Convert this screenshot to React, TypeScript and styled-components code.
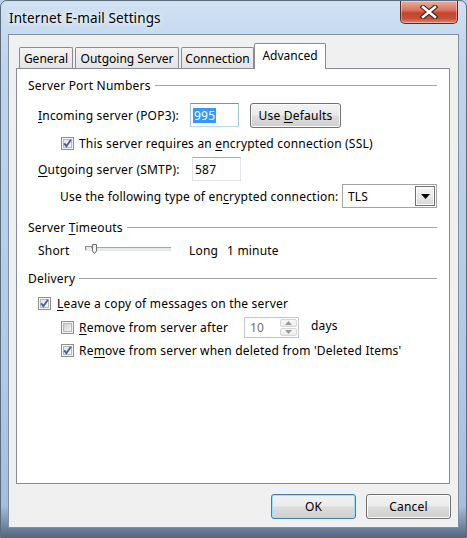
import React from "react";
import styled, { createGlobalStyle, css } from "styled-components";

const GlobalStyle = createGlobalStyle`
  html, body { margin: 0; padding: 0; }
  body {
    width: 467px;
    height: 538px;
    overflow: hidden;
    background: #b9d0e8;
    font-family: "Segoe UI", "Noto Sans", "DejaVu Sans", sans-serif;
    font-size: 12px;
    letter-spacing: 0.2px;
    color: #000;
  }
`;

const Window = styled.div`
  box-sizing: border-box;
  width: 467px;
  height: 538px;
  display: flex;
  flex-direction: column;
  padding: 0 7px 9px 7px;
  border: 1px solid #5d6c7c;
  border-radius: 7px 7px 0 0;
  background: linear-gradient(
    180deg,
    #d0e1f2 0px,
    #bfd5ec 60px,
    #aecae8 380px,
    #a3bfdd 505px,
    #51617a 538px
  );
`;

const TitleBar = styled.div`
  height: 33px;
  display: flex;
  align-items: flex-start;
`;

const Title = styled.div`
  margin: 9px 0 0 1px;
  line-height: 16px;
  font-size: 13.5px;
  letter-spacing: 0.1px;
  text-shadow: 0 0 6px rgba(255, 255, 255, 0.95), 0 0 10px rgba(255, 255, 255, 0.8);
`;

const CloseButton = styled.div`
  margin-left: auto;
  margin-right: 1px;
  width: 58px;
  height: 23px;
  box-sizing: border-box;
  border: 1px solid #5e2a22;
  border-top: none;
  border-radius: 0 0 5px 5px;
  background: linear-gradient(180deg, #eab1a3 0%, #d8735d 42%, #c5432b 55%, #c8503a 80%, #dd8a6c 100%);
  box-shadow: inset 0 0 0 1px rgba(255, 255, 255, 0.35);
  display: flex;
  align-items: center;
  justify-content: center;
`;

const Client = styled.div`
  flex: 1;
  display: flex;
  flex-direction: column;
  padding: 8px 8px 8px 7px;
  background: #f0f0f0;
  border: 1px solid #7f90a3;
`;

const TabStrip = styled.div`
  height: 25px;
  display: flex;
  align-items: flex-end;
  padding-left: 3px;
`;

const Tab = styled.div<{ $w: number; $active?: boolean }>`
  box-sizing: border-box;
  width: ${({ $w }) => $w}px;
  height: 21px;
  margin-right: 1px;
  border: 1px solid #898c95;
  border-bottom: none;
  border-radius: 2px 2px 0 0;
  background: linear-gradient(180deg, #f3f3f3 0%, #ececec 50%, #e4e4e4 100%);
  display: flex;
  align-items: center;
  justify-content: center;
  white-space: nowrap;
  letter-spacing: 0;

  ${({ $active }) =>
    $active &&
    css`
      height: 26px;
      margin: 0 0 -1px -1px;
      background: #fff;
      position: relative;
      z-index: 1;
      padding-bottom: 2px;
    `}
`;

const Panel = styled.div`
  flex: 1;
  background: #fff;
  border: 1px solid #898c95;
  padding: 0 12px 0 11px;
  display: flex;
  flex-direction: column;
`;

const GroupHeader = styled.div<{ $mt: number }>`
  height: 18px;
  margin-top: ${({ $mt }) => $mt}px;
  display: flex;
  align-items: center;
  gap: 4px;
  white-space: nowrap;

  &::after {
    content: "";
    flex: 1;
    height: 1px;
    background: #a5a5a5;
  }
`;

const Row = styled.div<{ $indent: number; $h: number; $mt: number }>`
  height: ${({ $h }) => $h}px;
  margin-top: ${({ $mt }) => $mt}px;
  margin-left: ${({ $indent }) => $indent}px;
  display: flex;
  align-items: center;
  white-space: nowrap;
`;

const Label = styled.div<{ $w?: number; $gap?: number }>`
  ${({ $w }) => ($w ? `width: ${$w}px; flex: none;` : "")}
  display: flex;
  align-items: center;
  gap: ${({ $gap }) => $gap ?? 5}px;
`;

const U = styled.span`
  text-decoration: underline;
  text-underline-offset: 2px;
`;

const TextBox = styled.div<{ $focused?: boolean }>`
  box-sizing: border-box;
  width: 49px;
  height: 24px;
  padding: 0 2px;
  display: flex;
  align-items: center;
  background: #fff;
  border: 1px solid #e2e3ea;
  border-top-color: #abadb3;
  ${({ $focused }) =>
    $focused &&
    css`
      border-color: #a4c9e3;
      border-top-color: #5a9bd0;
      border-bottom-color: #b7d9ed;
    `}
`;

const Selection = styled.span`
  background: #3399ff;
  color: #fff;
  padding: 0 1px;
  line-height: 15px;
`;

const Button = styled.div<{ $w: number; $default?: boolean }>`
  box-sizing: border-box;
  width: ${({ $w }) => $w}px;
  height: 25px;
  display: flex;
  align-items: center;
  justify-content: center;
  border: 1px solid #707070;
  border-radius: 3px;
  background: linear-gradient(180deg, #f2f2f2 0%, #ebebeb 48%, #dddddd 52%, #cfcfcf 100%);
  box-shadow: inset 0 0 0 1px #fbfbfb;
  ${({ $default }) =>
    $default &&
    css`
      border-color: #3c7fb1;
      box-shadow: inset 0 0 0 1px #9fe0f8;
    `}
`;

const Select = styled.div`
  box-sizing: border-box;
  width: 98px;
  height: 24px;
  display: flex;
  align-items: center;
  padding: 1px 1px 1px 5px;
  background: #fff;
  border: 1px solid #a3a3a3;
  span {
    flex: 1;
  }
`;

const DropButton = styled.div`
  box-sizing: border-box;
  width: 20px;
  height: 20px;
  border: 1px solid #6f6f6f;
  background: linear-gradient(180deg, #f7f7f7 0%, #e8e8e8 55%, #d6d6d6 100%);
  box-shadow: inset 0 0 0 1px #fff;
  display: flex;
  align-items: center;
  justify-content: center;
`;

const SliderLabel = styled.div<{ $w: number }>`
  width: ${({ $w }) => $w}px;
  flex: none;
`;

const Spinner = styled.div`
  box-sizing: border-box;
  width: 55px;
  height: 21px;
  display: flex;
  align-items: stretch;
  border: 1px solid #c7c7c7;
  background: #fff;
  color: #6d6d6d;
  span {
    flex: 1;
    display: flex;
    align-items: center;
    padding-left: 5px;
  }
`;

const SpinButtons = styled.div`
  width: 17px;
  display: flex;
  flex-direction: column;
  padding: 1px 1px 1px 0;
  gap: 1px;
`;

const SpinHalf = styled.div`
  flex: 1;
  border: 1px solid #d6d6d6;
  border-radius: 2px;
  background: linear-gradient(180deg, #f7f7f7, #ececec);
  display: flex;
  align-items: center;
  justify-content: center;
`;

const Trailing = styled.span<{ $ml: number }>`
  margin-left: ${({ $ml }) => $ml}px;
  margin-bottom: 4px;
`;

const Footer = styled.div`
  height: 25px;
  margin: 10px -1px 0 0;
  display: flex;
  justify-content: flex-end;
  gap: 10px;
`;

function CheckBox({ checked }: { checked?: boolean }) {
  return (
    <svg width="13" height="13" viewBox="0 0 13 13" style={{ flex: "none" }}>
      <defs>
        <linearGradient id={checked ? "cbOn" : "cbOff"} x1="0" y1="0" x2="1" y2="1">
          <stop offset="0" stopColor={checked ? "#e4e4e4" : "#cbcbcb"} />
          <stop offset="1" stopColor="#f7f7f7" />
        </linearGradient>
      </defs>
      <rect x="0.5" y="0.5" width="12" height="12" fill="#f4f4f4" stroke="#8f8f8f" />
      <rect x="2.5" y="2.5" width="8" height="8" fill={`url(#${checked ? "cbOn" : "cbOff"})`} stroke="#b9b9b9" />
      {checked && (
        <path d="M3.2 6.4 L5.4 9.2 L9.9 2.8" fill="none" stroke="#4a5d94" strokeWidth="1.9" />
      )}
    </svg>
  );
}

function SliderTrack() {
  return (
    <svg width="87" height="14" viewBox="0 0 87 14">
      <rect x="0" y="4" width="86" height="4" fill="#e7eaea" />
      <line x1="6" y1="4.5" x2="86" y2="4.5" stroke="#a7a7a7" />
      <line x1="0" y1="3.5" x2="7" y2="3.5" stroke="#8a8a8a" />
      <line x1="0.5" y1="3.5" x2="0.5" y2="7" stroke="#8a8a8a" />
      <path d="M7.5 1.5 H11.5 V8 L9.5 10.5 L7.5 8 Z" fill="#f1f1f1" stroke="#6f6f6f" />
    </svg>
  );
}

function Arrow({ up, color = "#000", w = 9 }: { up?: boolean; color?: string; w?: number }) {
  const h = Math.ceil(w / 2);
  return (
    <svg width={w} height={h} viewBox={`0 0 ${w} ${h}`}>
      <path d={up ? `M0 ${h} L${w / 2} 0 L${w} ${h} Z` : `M0 0 L${w} 0 L${w / 2} ${h} Z`} fill={color} />
    </svg>
  );
}

export default function App() {
  return (
    <>
      <GlobalStyle />
      <Window>
        <TitleBar>
          <Title>Internet E-mail Settings</Title>
          <CloseButton>
            <svg width="20" height="14" viewBox="0 0 20 14">
              <path d="M4 2 L16 12 M16 2 L4 12" stroke="#3a1a14" strokeWidth="4.6" strokeLinecap="square" />
              <path d="M4 2 L16 12 M16 2 L4 12" stroke="#fff" strokeWidth="2.6" strokeLinecap="square" />
            </svg>
          </CloseButton>
        </TitleBar>

        <Client>
          <TabStrip>
            <Tab $w={54}>General</Tab>
            <Tab $w={104} style={{ marginLeft: 1 }}>Outgoing Server</Tab>
            <Tab $w={73} style={{ marginLeft: 1 }}>Connection</Tab>
            <Tab $w={72} $active>Advanced</Tab>
          </TabStrip>

          <Panel>
            <GroupHeader $mt={7}>Server Port Numbers</GroupHeader>

            <Row $indent={10} $h={26} $mt={8}>
              <Label $w={152}>
                <span>
                  <U>I</U>ncoming server (POP3):
                </span>
              </Label>
              <TextBox $focused>
                <Selection>995</Selection>
              </TextBox>
              <Button $w={91} style={{ marginLeft: 11 }}>
                <span>
                  Use <U>D</U>efaults
                </span>
              </Button>
            </Row>

            <Row $indent={33} $h={18} $mt={6}>
              <Label>
                <CheckBox checked />
                <span>
                  This server requires an <U>e</U>ncrypted connection (SSL)
                </span>
              </Label>
            </Row>

            <Row $indent={10} $h={26} $mt={4}>
              <Label $w={154}>
                <span>
                  <U>O</U>utgoing server (SMTP):
                </span>
              </Label>
              <TextBox>587</TextBox>
            </Row>

            <Row $indent={32} $h={26} $mt={1}>
              <Label $w={282}>
                <span>
                  Use the following type of en<U>c</U>rypted connection:
                </span>
              </Label>
              <Select>
                <span>TLS</span>
                <DropButton>
                  <Arrow w={9} />
                </DropButton>
              </Select>
            </Row>

            <GroupHeader $mt={9}>
              <span>
                Server <U>T</U>imeouts
              </span>
            </GroupHeader>

            <Row $indent={10} $h={20} $mt={4}>
              <SliderLabel $w={47}>Short</SliderLabel>
              <SliderTrack />
              <SliderLabel $w={38} style={{ marginLeft: 17 }}>
                Long
              </SliderLabel>
              <span>1 minute</span>
            </Row>

            <GroupHeader $mt={9}>Delivery</GroupHeader>

            <Row $indent={10} $h={18} $mt={7}>
              <Label $gap={6}>
                <CheckBox checked />
                <span>
                  <U>L</U>eave a copy of messages on the server
                </span>
              </Label>
            </Row>

            <Row $indent={33} $h={22} $mt={4}>
              <Label $w={183}>
                <CheckBox />
                <span>
                  <U>R</U>emove from server after
                </span>
              </Label>
              <Spinner>
                <span>10</span>
                <SpinButtons>
                  <SpinHalf>
                    <Arrow up w={7} color="#9a9a9a" />
                  </SpinHalf>
                  <SpinHalf>
                    <Arrow w={7} color="#9a9a9a" />
                  </SpinHalf>
                </SpinButtons>
              </Spinner>
              <Trailing $ml={12}>days</Trailing>
            </Row>

            <Row $indent={33} $h={18} $mt={3}>
              <Label>
                <CheckBox checked />
                <span>
                  Re<U>m</U>ove from server when deleted from 'Deleted Items'
                </span>
              </Label>
            </Row>
          </Panel>

          <Footer>
            <Button $w={85} $default>
              OK
            </Button>
            <Button $w={85}>Cancel</Button>
          </Footer>
        </Client>
      </Window>
    </>
  );
}
